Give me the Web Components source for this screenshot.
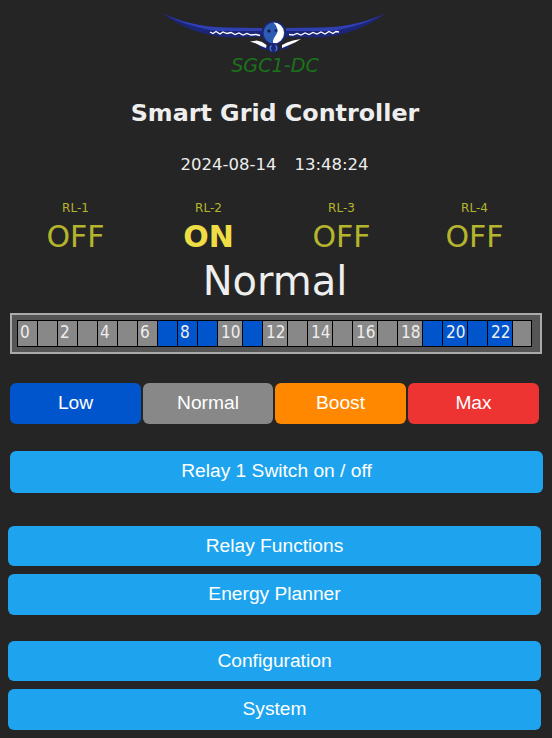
<!DOCTYPE html>
<html>
<head>
<meta charset="utf-8">
<title>Smart Grid Controller</title>
<style>
    html, body { margin: 0; padding: 0; background: #252525; }
    body { width: 552px; height: 738px; overflow: hidden; font-family: "DejaVu Sans", sans-serif; color: #eee; }
    sgc-app { height: 738px; }
</style>
</head>
<body>
<sgc-app>
    <sgc-logo name="SGC1-DC"></sgc-logo>
    <sgc-title>Smart Grid Controller</sgc-title>
    <sgc-clock date="2024-08-14" time="13:48:24"></sgc-clock>
    <sgc-relays>
        <sgc-relay name="RL-1" state="OFF"></sgc-relay>
        <sgc-relay name="RL-2" state="ON"></sgc-relay>
        <sgc-relay name="RL-3" state="OFF"></sgc-relay>
        <sgc-relay name="RL-4" state="OFF"></sgc-relay>
    </sgc-relays>
    <sgc-mode>Normal</sgc-mode>
    <sgc-hours active="7,8,9,11,19,20,21,22"></sgc-hours>
    <sgc-modes>
        <sgc-button color="#0055cc" h="41">Low</sgc-button>
        <sgc-button color="#888888" h="41">Normal</sgc-button>
        <sgc-button color="#ff8800" h="41">Boost</sgc-button>
        <sgc-button color="#ee3333" h="41">Max</sgc-button>
    </sgc-modes>
    <sgc-button class="relay" h="42" style="margin: 27px 9px 33px 10px">Relay 1 Switch on / off</sgc-button>
    <sgc-menu>
        <sgc-button h="40">Relay Functions</sgc-button>
        <sgc-button h="41">Energy Planner</sgc-button>
    </sgc-menu>
    <sgc-menu style="margin-top: 26px">
        <sgc-button h="40">Configuration</sgc-button>
        <sgc-button h="41">System</sgc-button>
    </sgc-menu>
</sgc-app>

<script>
class SgcApp extends HTMLElement {
    constructor() {
        super()
        this.attachShadow({ mode: "open" })
        this.shadowRoot.innerHTML = `
            <style>
                :host { display: flex; flex-direction: column; }
            </style>
            <slot></slot>
        `
    }
}

class SgcLogo extends HTMLElement {
    constructor() {
        super()
        this.attachShadow({ mode: "open" })
        this.shadowRoot.innerHTML = `
            <style>
                :host { display: flex; flex-direction: column; align-items: center; height: 83px; }
                svg { display: block; width: 240px; height: 56px; flex: none; }
                span { font: italic 19.200px/22px "DejaVu Sans", sans-serif; color: #1a731a; margin-left: -2px; margin-top: -1px; }
            </style>
            <svg viewBox="156 0 240 56">
                <!-- wings -->
                <path d="M162 13 C178 21 200 27 225 27.500 L262 28 L262 37 L228 37.500 C204 36 180 27 162 13 Z" fill="#1c2678"/>
                <path d="M386 13 C370 21 348 27 323 27.500 L286 28 L286 37 L320 37.500 C344 36 368 27 386 13 Z" fill="#1c2678"/>
                <path d="M162 13 C178 21 200 27 225 27.500 L262 28 L262 31 L216 31 C196 28 176 21 162 13 Z" fill="#3040b0"/>
                <path d="M386 13 C370 21 348 27 323 27.500 L286 28 L286 31 L332 31 C352 28 372 21 386 13 Z" fill="#3040b0"/>
                <path d="M210 32 L213 33.500 L216 31.500 L220 34 L223 32 L227 33.500 L231 32.500 L235 34.500 L239 33 L243 35 L247 33.500 L251 35 L256 34.500 L260 35.500" fill="none" stroke="#fff" stroke-width="1.300"/>
                <path d="M289 34.500 L293 35 L297 33.500 L301 35 L305 33 L309 34.500 L313 32.500 L317 34 L321 32 L325 34 L329 31.500 L333 33.500 L336 31.500 L339 32" fill="none" stroke="#fff" stroke-width="1.300"/>
                <!-- head -->
                <circle cx="274" cy="33" r="12" fill="#1c2678"/>
                <circle cx="274" cy="33" r="10.500" fill="#2c5cb4"/>
                <path d="M273.500 22.500 A10.500 10.500 0 0 1 273.500 43.500 C272 41 274 38 276 35 C279 31 277 26 273.500 22.500 Z" fill="#fff"/>
                <circle cx="276" cy="30.500" r="1.500" fill="#1c2678"/>
                <circle cx="269" cy="31" r="1.600" fill="#10183f"/>
                <!-- tail feathers -->
                <path d="M257 43 L263 44 L269 47 L268 50 L262 49 Z M292 43 L286 44 L280 47 L281 50 L288 48 Z" fill="#1c2678"/>
                <path d="M250 41.500 L257 40.500 L262 42 L266.500 45 L266 48 L261 46 L256 43.500 Z" fill="#fff"/>
                <path d="M301 39 L293 40.500 L287 42.500 L282 45 L282 48 L288 45.500 L295 42.500 Z" fill="#fff"/>
                <circle cx="273.500" cy="48" r="5" fill="#1c2678"/>
                <path d="M271.500 45.500 A4 4 0 0 0 271.500 51 M275.500 45.500 A4 4 0 0 1 275.500 51" fill="none" stroke="#4a7cd0" stroke-width="1.200"/>
            </svg>
            <span></span>
        `
        this.shadowRoot.querySelector("span").textContent = this.getAttribute("name")
    }
}

class SgcTitle extends HTMLElement {
    constructor() {
        super()
        this.attachShadow({ mode: "open" })
        this.shadowRoot.innerHTML = `
            <style>
                :host { display: block; text-align: center; font: bold 23.800px/30px "DejaVu Sans", sans-serif; color: #eee; margin-top: 15px; padding-right: 2px; }
            </style>
            <slot></slot>
        `
    }
}

class SgcClock extends HTMLElement {
    constructor() {
        super()
        this.attachShadow({ mode: "open" })
        this.shadowRoot.innerHTML = `
            <style>
                :host { display: flex; justify-content: center; gap: 18px; font: 16.500px/20px "DejaVu Sans", sans-serif; color: #eee; margin-top: 27px; padding-right: 3px; }
            </style>
            <span></span><span></span>
        `
        const spans = this.shadowRoot.querySelectorAll("span")
        spans[0].textContent = this.getAttribute("date")
        spans[1].textContent = this.getAttribute("time")
    }
}

class SgcRelays extends HTMLElement {
    constructor() {
        super()
        this.attachShadow({ mode: "open" })
        this.shadowRoot.innerHTML = `
            <style>
                :host { display: grid; grid-template-columns: repeat(4, 133px); padding-left: 9px; margin-top: 27px; }
            </style>
            <slot></slot>
        `
    }
}

class SgcRelay extends HTMLElement {
    constructor() {
        super()
        this.attachShadow({ mode: "open" })
        this.shadowRoot.innerHTML = `
            <style>
                :host { display: flex; flex-direction: column; align-items: center; color: #b5b52d; font-family: "DejaVu Sans", sans-serif; }
                small { font-size: 12px; line-height: 14px; margin-top: -1px; margin-bottom: 1px; }
                b { font-size: 30px; line-height: 36px; font-weight: normal; margin-top: 3px; }
                b.on { font-weight: bold; color: #eedd44; }
            </style>
            <small></small><b></b>
        `
        const state = this.getAttribute("state")
        const value = this.shadowRoot.querySelector("b")
        this.shadowRoot.querySelector("small").textContent = this.getAttribute("name")
        value.textContent = state
        if (state === "ON") value.className = "on"
    }
}

class SgcMode extends HTMLElement {
    constructor() {
        super()
        this.attachShadow({ mode: "open" })
        this.shadowRoot.innerHTML = `
            <style>
                :host { display: block; text-align: center; font: 40px/48px "DejaVu Sans", sans-serif; color: #eee; margin-top: 2px; padding-right: 2px; }
            </style>
            <slot></slot>
        `
    }
}

class SgcHours extends HTMLElement {
    constructor() {
        super()
        this.attachShadow({ mode: "open" })
        this.shadowRoot.innerHTML = `
            <style>
                :host { display: block; box-sizing: border-box; width: 532px; height: 41px; margin: 8px 0 0 10px; padding: 5px; background: #555; border: 2px solid #aaa; }
                .row { display: flex; width: 515px; height: 27px; box-sizing: border-box; border: 1px solid #000; }
                .cell { box-sizing: border-box; height: 25px; background: #888; color: #eee; border-left: 1px solid #000; font: 17px/22px "DejaVu Sans Condensed", "DejaVu Sans", sans-serif; font-stretch: condensed; text-align: left; padding-left: 2px; white-space: nowrap; flex: none; width: 20px; }
                .cell:first-child { border-left: 0; width: 19px; }
                .cell:last-child { width: 19px; }
                .cell.wide { width: 25px; padding-left: 3px; }
                .cell.on { background: #0055cc; }
            </style>
            <div class="row"></div>
        `
        const active = this.getAttribute("active").split(",").map(Number)
        const row = this.shadowRoot.querySelector(".row")
        for (let hour = 0; hour < 24; hour++) {
            const cell = document.createElement("div")
            cell.className = "cell"
            if (hour % 2 === 0) cell.textContent = hour
            if (hour >= 10 && hour % 2 === 0) cell.classList.add("wide")
            if (active.includes(hour)) cell.classList.add("on")
            row.appendChild(cell)
        }
    }
}

class SgcModes extends HTMLElement {
    constructor() {
        super()
        this.attachShadow({ mode: "open" })
        this.shadowRoot.innerHTML = `
            <style>
                :host { display: grid; grid-template-columns: 131px 130px 131px 131px; gap: 2px; margin: 29px 0 0 10px; }
            </style>
            <slot></slot>
        `
    }
}

class SgcMenu extends HTMLElement {
    constructor() {
        super()
        this.attachShadow({ mode: "open" })
        this.shadowRoot.innerHTML = `
            <style>
                :host { display: flex; flex-direction: column; gap: 8px; margin: 0 11px 0 8px; }
            </style>
            <slot></slot>
        `
    }
}

class SgcButton extends HTMLElement {
    constructor() {
        super()
        this.attachShadow({ mode: "open" })
        this.shadowRoot.innerHTML = `
            <style>
                :host { display: flex; align-items: center; justify-content: center; box-sizing: border-box; border-radius: 6px; color: #fff; font: 19.200px "Liberation Sans", Arial, sans-serif; background: var(--bg, #1ea4ee); cursor: pointer; }
            </style>
            <slot></slot>
        `
        const h = Number(this.getAttribute("h"))
        this.style.height = h + "px"
        this.style.paddingBottom = h === 40 ? "0" : "2px"
        if (this.getAttribute("color")) this.style.setProperty("--bg", this.getAttribute("color"))
    }
}

customElements.define("sgc-app", SgcApp)
customElements.define("sgc-logo", SgcLogo)
customElements.define("sgc-title", SgcTitle)
customElements.define("sgc-clock", SgcClock)
customElements.define("sgc-relays", SgcRelays)
customElements.define("sgc-relay", SgcRelay)
customElements.define("sgc-mode", SgcMode)
customElements.define("sgc-hours", SgcHours)
customElements.define("sgc-modes", SgcModes)
customElements.define("sgc-menu", SgcMenu)
customElements.define("sgc-button", SgcButton)
</script>
</body>
</html>
